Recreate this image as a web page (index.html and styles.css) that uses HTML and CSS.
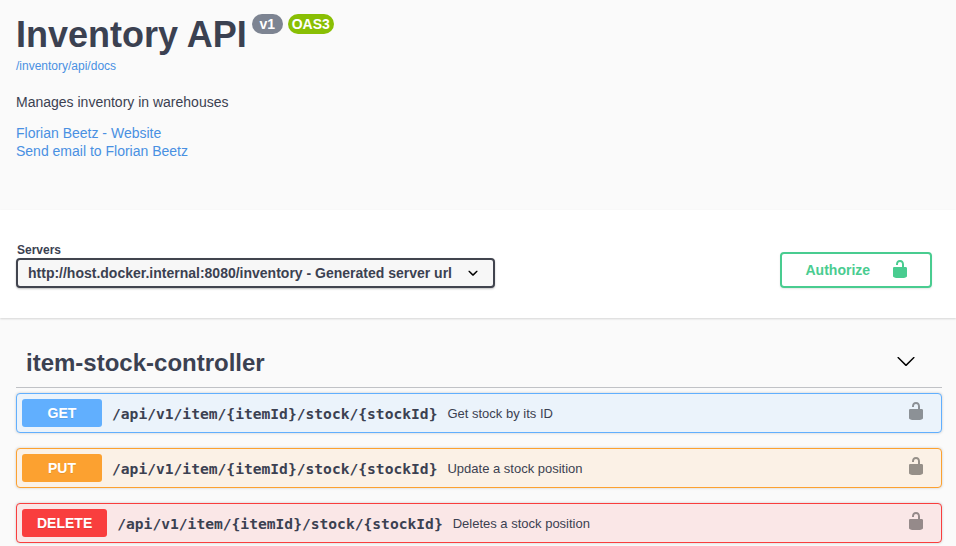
FILE: index.html
```html
<!DOCTYPE html>
<html lang="en">
<head>
<meta charset="utf-8">
<title>Inventory API</title>
<link rel="stylesheet" href="styles.css">
</head>
<body>
<svg class="defs" width="0" height="0" aria-hidden="true">
  <symbol id="unlocked" viewBox="0 0 20 20"><path d="M15.8 8H14V5.6C14 2.703 12.665 1 10 1 7.334 1 6 2.703 6 5.6V6h2v-.801C8 3.754 8.797 3 10 3c1.203 0 2 .754 2 2.199V8H4c-.553 0-1 .646-1 1.199V17c0 .549.428 1.139.951 1.307l1.197.387C5.672 18.861 6.55 19 7.1 19h5.8c.549 0 1.428-.139 1.951-.307l1.196-.387c.524-.167.953-.757.953-1.306V9.199C17 8.646 16.352 8 15.8 8z"/></symbol>
</svg>
<header class="info">
  <h1 class="title">Inventory API<span class="badges"><span class="badge version">v1</span><span class="badge oas">OAS3</span></span></h1>
  <a class="docs-link">/inventory/api/docs</a>
  <p class="description">Manages inventory in warehouses</p>
  <a class="contact">Florian Beetz - Website</a>
  <a class="contact">Send email to Florian Beetz</a>
</header>
<section class="scheme">
  <div class="servers">
    <span class="servers-label">Servers</span>
    <div class="select"><span class="select-text">http://host.docker.internal:8080/inventory - Generated server url</span>
      <svg class="select-arrow" viewBox="0 0 20 20"><path d="M13.418 7.859c.271-.268.709-.268.978 0 .27.268.272.701 0 .969l-3.908 3.83c-.27.268-.707.268-.979 0l-3.908-3.83c-.27-.267-.27-.701 0-.969.271-.268.709-.268.978 0L10 11l3.418-3.141z"/></svg>
    </div>
  </div>
  <button class="authorize"><span>Authorize</span><svg class="icon"><use href="#unlocked"/></svg></button>
</section>
<main class="operations">
  <h2 class="tag"><span>item-stock-controller</span>
    <svg class="icon" viewBox="0 0 20 20"><path d="M17.418 6.109c.272-.268.709-.268.979 0s.271.701 0 .969l-7.908 7.83c-.27.268-.707.268-.979 0l-7.908-7.83c-.27-.268-.27-.701 0-.969.271-.268.709-.268.979 0L10 13.25l7.418-7.141z"/></svg>
  </h2>
  <div class="op get"><span class="method">GET</span><span class="path">/api/v1/item/{itemId}/stock/{stockId}</span><span class="summary">Get stock by its ID</span><svg class="icon"><use href="#unlocked"/></svg></div>
  <div class="op put"><span class="method">PUT</span><span class="path">/api/v1/item/{itemId}/stock/{stockId}</span><span class="summary">Update a stock position</span><svg class="icon"><use href="#unlocked"/></svg></div>
  <div class="op delete"><span class="method">DELETE</span><span class="path">/api/v1/item/{itemId}/stock/{stockId}</span><span class="summary">Deletes a stock position</span><svg class="icon"><use href="#unlocked"/></svg></div>
</main>
</body>
</html>
```
FILE: styles.css
```css
* { box-sizing: border-box; }
html { overflow: hidden; }
body {
  margin: 0;
  height: 546px;
  overflow: hidden;
  background: #fafafa;
  color: #3b4151;
  font-family: "Liberation Sans", Arial, sans-serif;
}
.defs { display: none; }
.icon { width: 20px; height: 20px; flex: none; }

.info {
  height: 210px;
  padding: 14px 16px 0;
  display: flex;
  flex-direction: column;
  align-items: flex-start;
}
.title {
  display: flex;
  margin: 0;
  height: 42px;
  font-size: 36px;
  line-height: 42px;
}
.badges { display: flex; gap: 5px; margin-left: 5px; }
.badge {
  height: 20px;
  border-radius: 10px;
  color: #fff;
  font-size: 14px;
  line-height: 20px;
  text-align: center;
}
.version { width: 31px; background: #7d8492; }
.oas { width: 46px; background: #89bf04; }
.docs-link { margin-top: 3px; font-size: 12px; line-height: 14px; color: #4990e2; }
.description { margin: 20px 0 13px; font-size: 14px; line-height: 18px; }
.contact { font-size: 14px; line-height: 18px; color: #4990e2; }

.scheme {
  height: 108px;
  padding: 33px 24px 0 16px;
  display: flex;
  justify-content: space-between;
  align-items: flex-start;
  background: #fff;
  box-shadow: 0 1px 2px rgba(0, 0, 0, .15);
}
.servers-label {
  display: block;
  height: 15px;
  padding-left: 1px;
  font-size: 12px;
  font-weight: bold;
  line-height: 14px;
}
.select {
  width: 479px;
  height: 30px;
  display: flex;
  align-items: center;
  justify-content: space-between;
  padding: 0 10px;
  border: 2px solid #41444e;
  border-radius: 4px;
  background: #f7f7f7;
  box-shadow: 0 1px 2px rgba(0, 0, 0, .25);
  font-size: 14px;
  font-weight: bold;
}
.select-text { white-space: nowrap; }
.select-arrow { width: 20px; height: 20px; fill: #000; }
.authorize {
  width: 152px;
  height: 36px;
  margin-top: 9px;
  padding: 0 20px 0 23.5px;
  display: flex;
  align-items: center;
  justify-content: space-between;
  border: 2px solid #49cc90;
  border-radius: 4px;
  background: transparent;
  box-shadow: 0 1px 2px rgba(0, 0, 0, .1);
  color: #49cc90;
  fill: #49cc90;
  font: bold 14px "Liberation Sans", Arial, sans-serif;
}
.authorize .icon { margin-top: -2px; }

.operations { padding: 20px 14px 0 16px; }
.tag {
  height: 50px;
  margin: 0 0 5px;
  padding: 0 26px 0 10px;
  display: flex;
  align-items: center;
  justify-content: space-between;
  border-bottom: 1px solid rgba(59, 65, 81, .3);
  font-size: 24px;
}
.tag .icon { margin-top: -4px; }
.op {
  height: 40px;
  margin-bottom: 15px;
  padding: 5px 15px 5px 5px;
  display: flex;
  align-items: center;
  border: 1px solid;
  border-radius: 4px;
  box-shadow: 0 0 3px rgba(0, 0, 0, .19);
}
.method {
  min-width: 80px;
  height: 28px;
  padding: 0 15px;
  border-radius: 3px;
  color: #fff;
  font-size: 14px;
  font-weight: bold;
  line-height: 28px;
  text-align: center;
  text-shadow: 0 1px 0 rgba(0, 0, 0, .1);
}
.path {
  margin: 2px 10px 0;
  font: bold 14.62px/20px "DejaVu Sans Mono", monospace;
}
.summary { font-size: 13px; line-height: 20px; padding-top: 1px; }
.op .icon { margin: -4px 0 0 auto; fill: #000; opacity: .4; }
.get { border-color: #61affe; background: #ebf3fb; }
.get .method { background: #61affe; }
.put { border-color: #fca130; background: #fbf1e6; }
.put .method { background: #fca130; }
.delete { border-color: #f93e3e; background: #fae7e7; }
.delete .method { background: #f93e3e; }
```
